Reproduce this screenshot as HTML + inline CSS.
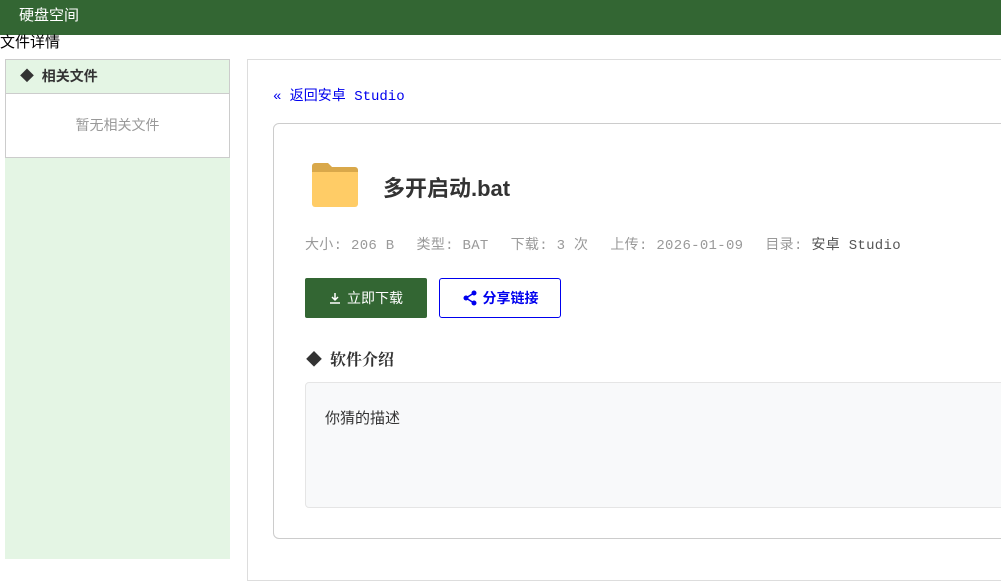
<!DOCTYPE html>
<html><head><meta charset="utf-8"><style>
body{margin:0;width:1001px;height:559px;overflow:hidden;background:#fff;font-family:"Liberation Sans","Noto Sans CJK SC",sans-serif;position:relative}
.hdr{position:absolute;left:0;top:0;width:1001px;height:35px;background:#336633;color:#fff;font-size:15px;line-height:32px}
.hdr span{position:absolute;left:19px}
.t{position:absolute;left:0;top:34px;font-size:15px;line-height:18px;color:#000}
.side{position:absolute;left:5px;top:59px;width:225px;height:500px;background:#e4f5e4}
.box{position:absolute;left:0;top:0;width:223px;height:97px;border:1px solid #ccc;background:#fff}
.bh{height:33px;background:#e4f5e4;border-bottom:1px solid #ccc;font-weight:bold;font-size:14px;line-height:33px;color:#333;padding-left:14px}
.bb{text-align:center;color:#999;font-size:14px;line-height:62px}
.main{position:absolute;left:247px;top:59px;width:800px;height:520px;border:1px solid #ddd;border-right:none}
.back{position:absolute;left:273px;top:85px;color:#0000ee;font-family:"Liberation Mono","Noto Sans CJK SC",monospace;font-size:14px}
.card{position:absolute;left:273px;top:123px;width:760px;height:414px;border:1px solid #ccc;border-radius:6px}
.title{position:absolute;left:383px;top:171px;font-size:22px;font-weight:bold;color:#333}
.meta{position:absolute;left:305px;top:234px;font-family:"Liberation Mono","Noto Sans CJK SC",monospace;font-size:14px;color:#999;letter-spacing:0.3px}
.meta span{margin-right:22px}
.dl{position:absolute;left:305px;top:278px;width:122px;height:40px;background:#336633;border-radius:2px;color:#fff;font-size:14px;line-height:40px;text-align:center}
.sh{position:absolute;left:439px;top:278px;width:120px;height:38px;border:1px solid #0000ee;border-radius:3px;color:#0000ee;font-size:14px;line-height:38px;text-align:center}
.sec{position:absolute;left:306px;top:347px;font-size:16px;font-weight:bold;color:#333;font-family:"Liberation Serif","Noto Serif CJK SC",serif}
.desc{position:absolute;left:305px;top:382px;width:720px;height:124px;background:#f8f9fa;border:1px solid #e5e5e5;border-radius:4px}
.desc div{padding:24px 19px;font-size:15px;color:#333}
</style></head><body>
<div class="hdr"><span>硬盘空间</span></div>
<div class="t">文件详情</div>
<div class="side"><div class="box"><div class="bh">◆&nbsp;&nbsp;相关文件</div><div class="bb">暂无相关文件</div></div></div>
<div class="main"></div>
<div class="back">« 返回安卓 Studio</div>
<div class="card"></div>
<svg style="position:absolute;left:312px;top:163px" width="46" height="44" viewBox="0 0 46 44"><path d="M0 3a3 3 0 0 1 3-3h13l4 4h23a3 3 0 0 1 3 3v6H0z" fill="#d9a84a"/><path d="M0 9h46v32a3 3 0 0 1-3 3H3a3 3 0 0 1-3-3z" fill="#ffcc66"/></svg>
<div class="title">多开启动.bat</div>
<div class="meta"><span>大小: 206 B</span><span>类型: BAT</span><span>下载: 3 次</span><span>上传: 2026-01-09</span><span>目录: <b style="font-weight:normal;color:#555">安卓 Studio</b></span></div>
<div class="dl"><svg width="12" height="12" viewBox="0 0 12 12" style="vertical-align:-1px;margin-right:6px"><path d="M6 1v7M3 5l3 3 3-3M1 11h10" stroke="#fff" stroke-width="1.5" fill="none"/></svg>立即下载</div>
<div class="sh"><svg width="16" height="16" viewBox="0 0 16 16" style="vertical-align:-3px;margin-right:5px"><circle cx="12" cy="3" r="2.5" fill="#0000ee"/><circle cx="4" cy="8" r="2.5" fill="#0000ee"/><circle cx="12" cy="13" r="2.5" fill="#0000ee"/><path d="M12 3L4 8l8 5" stroke="#0000ee" stroke-width="1.5" fill="none"/></svg><b>分享链接</b></div>
<div class="sec">◆&nbsp;&nbsp;软件介绍</div>
<div class="desc"><div>你猜的描述</div></div>
</body></html>
